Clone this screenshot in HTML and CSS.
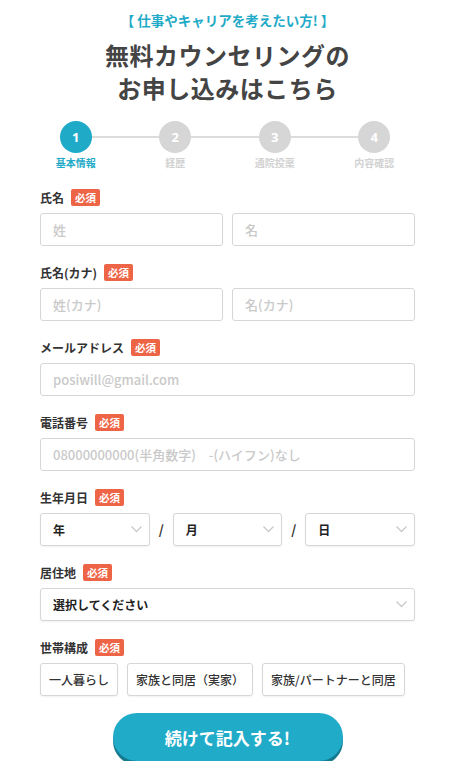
FILE: index.html
```html
<!DOCTYPE html>
<html lang="ja">
<head>
    <meta charset="UTF-8">
    <meta name="viewport" content="width=device-width, initial-scale=1.0">
    <title>無料カウンセリングのお申し込み</title>
    <link rel="stylesheet" href="styles.css">
</head>
<body>
    <div class="container">
        <p class="lead">【 仕事やキャリアを考えたい方! 】</p>
        <h1 class="title">無料カウンセリングの<br>お申し込みはこちら</h1>

        <ol class="steps">
            <li class="step active"><span class="step-num">1</span><span class="step-label">基本情報</span></li>
            <li class="step"><span class="step-num">2</span><span class="step-label">経歴</span></li>
            <li class="step"><span class="step-num">3</span><span class="step-label">通院投薬</span></li>
            <li class="step"><span class="step-num">4</span><span class="step-label">内容確認</span></li>
        </ol>

        <form class="form">
            <div class="field">
                <div class="label">氏名<span class="req">必須</span></div>
                <div class="pair">
                    <input class="input" type="text" placeholder="姓">
                    <input class="input" type="text" placeholder="名">
                </div>
            </div>

            <div class="field">
                <div class="label">氏名(カナ)<span class="req">必須</span></div>
                <div class="pair">
                    <input class="input" type="text" placeholder="姓(カナ)">
                    <input class="input" type="text" placeholder="名(カナ)">
                </div>
            </div>

            <div class="field">
                <div class="label">メールアドレス<span class="req">必須</span></div>
                <input class="input" type="email" placeholder="posiwill@gmail.com">
            </div>

            <div class="field">
                <div class="label">電話番号<span class="req">必須</span></div>
                <input class="input" type="tel" placeholder="08000000000(半角数字)　-(ハイフン)なし">
            </div>

            <div class="field">
                <div class="label">生年月日<span class="req">必須</span></div>
                <div class="date-row">
                    <div class="select-wrap">
                        <select class="select"><option>年</option></select>
                        <svg class="chev" width="11" height="7" viewBox="0 0 11 7"><path d="M0.5 0.5 L5.5 5.5 L10.5 0.5" fill="none" stroke="#c9c9c9" stroke-width="1.3"/></svg>
                    </div>
                    <span class="slash">/</span>
                    <div class="select-wrap">
                        <select class="select"><option>月</option></select>
                        <svg class="chev" width="11" height="7" viewBox="0 0 11 7"><path d="M0.5 0.5 L5.5 5.5 L10.5 0.5" fill="none" stroke="#c9c9c9" stroke-width="1.3"/></svg>
                    </div>
                    <span class="slash">/</span>
                    <div class="select-wrap">
                        <select class="select"><option>日</option></select>
                        <svg class="chev" width="11" height="7" viewBox="0 0 11 7"><path d="M0.5 0.5 L5.5 5.5 L10.5 0.5" fill="none" stroke="#c9c9c9" stroke-width="1.3"/></svg>
                    </div>
                </div>
            </div>

            <div class="field">
                <div class="label">居住地<span class="req">必須</span></div>
                <div class="select-wrap">
                    <select class="select"><option>選択してください</option></select>
                    <svg class="chev" width="11" height="7" viewBox="0 0 11 7"><path d="M0.5 0.5 L5.5 5.5 L10.5 0.5" fill="none" stroke="#c9c9c9" stroke-width="1.3"/></svg>
                </div>
            </div>

            <div class="field">
                <div class="label">世帯構成<span class="req">必須</span></div>
                <div class="choices">
                    <button type="button" class="choice">一人暮らし</button>
                    <button type="button" class="choice">家族と同居（実家）</button>
                    <button type="button" class="choice">家族/パートナーと同居</button>
                </div>
            </div>

            <div class="submit-row">
                <button type="button" class="submit">続けて記入する!</button>
            </div>
        </form>
    </div>
</body>
</html>
```

FILE: styles.css
```css
body {
    margin: 0;
    background: #fff;
    font-family: "Noto Sans CJK JP", "Noto Sans", sans-serif;
    color: #333;
}

.container {
    padding: 0 41px 0 40px;
}

.lead {
    margin: 10px 0 0;
    text-align: center;
    color: #1faac8;
    font-size: 13.5px;
    font-weight: bold;
    line-height: 20px;
}

.title {
    margin: 8px 0 0;
    text-align: center;
    color: #444;
    font-size: 24px;
    font-weight: bold;
    line-height: 33px;
    letter-spacing: 0.5px;
}

.steps {
    list-style: none;
    margin: 17px -9px 0 -14px;
    padding: 0;
    display: grid;
    grid-template-columns: repeat(4, 1fr);
    position: relative;
}

.steps::before {
    content: "";
    position: absolute;
    top: 15px;
    left: 12.5%;
    right: 12.5%;
    height: 2px;
    background: #dcdcdc;
}

.step {
    display: flex;
    flex-direction: column;
    align-items: center;
    position: relative;
}

.step-num {
    width: 32px;
    height: 32px;
    border-radius: 50%;
    background: #d6d6d6;
    color: #fff;
    font-family: "Noto Sans", sans-serif;
    font-weight: bold;
    font-size: 13px;
    display: flex;
    align-items: center;
    justify-content: center;
}

.step-label {
    margin-top: 3px;
    font-size: 10px;
    font-weight: bold;
    line-height: 14px;
    color: #d2d2d2;
}

.step.active .step-num {
    background: #1faac8;
}

.step.active .step-label {
    color: #1faac8;
}

.form {
    margin-top: 19px;
}

.field {
    margin-bottom: 18px;
}

.label {
    display: flex;
    align-items: center;
    gap: 7px;
    height: 16px;
    margin-bottom: 8px;
    font-size: 12px;
    font-weight: bold;
    color: #333;
}

.req {
    background: #ee6446;
    color: #fff;
    font-size: 10.5px;
    font-weight: bold;
    line-height: 17px;
    padding: 0 4px;
    border-radius: 2px;
}

.pair {
    display: grid;
    grid-template-columns: 1fr 1fr;
    gap: 9px;
}

.input {
    display: block;
    box-sizing: border-box;
    width: 100%;
    height: 33px;
    padding: 0 12px;
    border: 1px solid #d6d6d6;
    border-radius: 3px;
    font-family: "Noto Sans CJK JP", "Noto Sans", sans-serif;
    font-size: 13px;
    font-weight: 500;
    color: #333;
    background: #fff;
}

.input::placeholder {
    color: #c9c9c9;
}

.date-row {
    display: grid;
    grid-template-columns: 1fr 23px 1fr 23px 1fr;
    align-items: center;
}

.slash {
    text-align: center;
    font-size: 13px;
    font-weight: bold;
    color: #333;
}

.select-wrap {
    position: relative;
}

.select {
    display: block;
    box-sizing: border-box;
    width: 100%;
    height: 33px;
    padding: 0 12px;
    border: 1px solid #d6d6d6;
    border-radius: 3px;
    background: #fff;
    box-shadow: 0 1px 2px rgba(0, 0, 0, 0.06);
    appearance: none;
    -webkit-appearance: none;
    font-family: "Noto Sans CJK JP", "Noto Sans", sans-serif;
    font-size: 12px;
    font-weight: bold;
    color: #222;
}

.chev {
    position: absolute;
    right: 8px;
    top: 13px;
    pointer-events: none;
}

.choices {
    display: flex;
    gap: 9px;
}

.choice {
    height: 33px;
    padding: 0 8px;
    border: 1px solid #d6d6d6;
    border-radius: 3px;
    background: #fff;
    box-shadow: 0 1px 2px rgba(0, 0, 0, 0.06);
    font-family: "Noto Sans CJK JP", "Noto Sans", sans-serif;
    font-size: 12px;
    font-weight: 500;
    color: #333;
}

.submit-row {
    display: flex;
    justify-content: center;
    margin-top: -1px;
}

.submit {
    width: 230px;
    height: 48px;
    border: none;
    border-radius: 24px;
    background: #20abc9;
    box-shadow: 0 4px 0 #157a8f;
    color: #fff;
    font-family: "Noto Sans CJK JP", "Noto Sans", sans-serif;
    font-size: 17px;
    font-weight: bold;
}
```
